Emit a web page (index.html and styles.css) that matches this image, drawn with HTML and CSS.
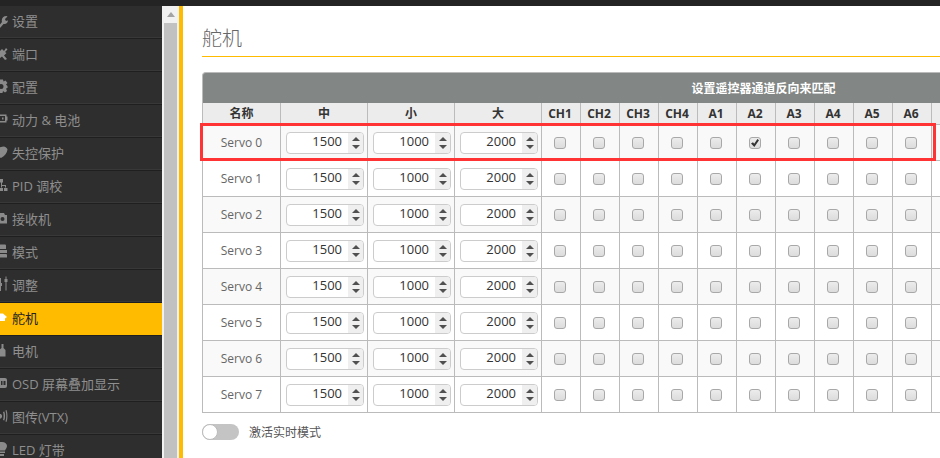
FILE: index.html
```html
<!DOCTYPE html>
<html>
	<head>
		<meta charset="UTF-8">
		<title>舵机</title>
		<link rel="stylesheet" href="styles.css">
	</head>
	<body>
		<div class="topbar"></div>
		<div class="app">
			<nav class="sidebar">
				<a class="nav-item"><svg class="nav-icon" viewBox="0 0 8 16"><path d="M-2 15 L2 10 C1 7 3 4 6.500 4 L7.500 4.500 L5 7 L5.500 8.500 L7 9 L8 8 C8 11 6 12.500 3.500 12 L0 16 Z"/></svg>设置</a>
				<a class="nav-item"><svg class="nav-icon" viewBox="0 0 8 16"><path d="M0 6 L2 4 L4 6 L6 3 L7.500 4.500 L5 7 L6.500 8 L4 10.500 L7 14 L5 15 L2 11.500 L0 13 Z"/></svg>端口</a>
				<a class="nav-item"><svg class="nav-icon" viewBox="0 0 8 16"><path fill-rule="evenodd" d="M-1 1.500 H3 L3.500 3.500 L5.500 2.500 L7.500 5 L6 6.500 L7.500 8 V10 L6 10.500 L7 13 L5 14.500 L3 13 L2.500 15 H-1 Z M1 6 A2.500 2.500 0 1 0 1 11 A2.500 2.500 0 1 0 1 6 Z"/></svg>配置</a>
				<a class="nav-item"><svg class="nav-icon" viewBox="0 0 8 16"><path fill-rule="evenodd" d="M0 3.500 H6.500 V5.500 H7.500 V9.500 H6.500 V11.500 H0 Z M0 5 V10 H5 V5 Z M2 6.500 H3.500 V8.500 H2 Z"/></svg>动力 &amp; 电池</a>
				<a class="nav-item"><svg class="nav-icon" viewBox="0 0 8 16"><path d="M-3 4 C0 3 2 3 4 2.500 C6 3 7 4 7.500 5.500 C7 9 5 12 1 14 L-3 12 Z"/></svg>失控保护</a>
				<a class="nav-item"><svg class="nav-icon" viewBox="0 0 8 16"><path d="M0 2 H3 V5.500 H0 Z M1 5.500 H2 V8 H6 V10.500 H5 V9 H2 V10.500 H1 Z M0 11 H3 V14 H0 Z M4 11 H7.500 V14 H4 Z"/></svg>PID 调校</a>
				<a class="nav-item"><svg class="nav-icon" viewBox="0 0 8 16"><path fill-rule="evenodd" d="M0 3 H4 L5 5 H7 V13.500 H0 Z M2.500 7 A2 2 0 1 0 2.500 11 A2 2 0 1 0 2.500 7 Z"/></svg>接收机</a>
				<a class="nav-item"><svg class="nav-icon" viewBox="0 0 8 16"><path d="M0 1.500 H5 A1 1 0 0 1 6 2.500 V6 H0 Z M0 7 H7 V10 H0 Z M0 11 H6 A1 1 0 0 1 7 12 V14.500 H0 Z"/></svg>模式</a>
				<a class="nav-item"><svg class="nav-icon" viewBox="0 0 8 16"><path d="M0 2 H1 V7 H2 V10 H1 V15 H0 Z M5.500 0.500 H6.500 V3 H7.500 V6 H6.500 V14.500 H5.500 V6 H4.500 V3 H5.500 Z"/></svg>调整</a>
				<a class="nav-item nav-item-active"><svg class="nav-icon" viewBox="0 0 8 16"><path d="M0 4.500 H3 L7 8 L5 9.500 V12 H0 Z"/></svg>舵机</a>
				<a class="nav-item"><svg class="nav-icon" viewBox="0 0 8 16"><path d="M1.500 2 H3.500 V6 L5.500 8 V14.500 H-1 V8 L1.500 6 Z"/></svg>电机</a>
				<a class="nav-item"><svg class="nav-icon" viewBox="0 0 8 16"><path fill-rule="evenodd" d="M-1 3 H5 A2 2 0 0 1 7 5 V11 A2 2 0 0 1 5 13 H-1 Z M1 6 V10 H2.500 V6 Z M3.500 6 V10 H5.500 V6 Z"/></svg>OSD 屏幕叠加显示</a>
				<a class="nav-item"><svg class="nav-icon" viewBox="0 0 8 16"><path d="M0 6 H1 L2 7.500 V9 L1 10.500 H0 Z M3 4 L4.300 3.500 C5.300 6 5.300 10 4.300 12.500 L3 12 C3.800 10 3.800 6 3 4 Z M5.500 2.500 L6.500 2 C7.800 5.500 7.800 10.500 6.500 14 L5.500 13.500 C6.600 10.500 6.600 5.500 5.500 2.500 Z"/></svg>图传(VTX)</a>
				<a class="nav-item"><svg class="nav-icon" viewBox="0 0 8 16"><path d="M2 1 C5 1 7 3 7 5 C7 7 5.500 8 5 9.500 H-1 V1 Z M-1 10.500 H5 V12 H-1 Z M-1 13 H4 V15 H-1 Z"/></svg>LED 灯带</a>
			</nav>
			<div class="scrollbar">
				<span class="scroll-arrow"></span>
				<span class="scroll-thumb"></span>
			</div>
			<main class="content">
				<h1 class="page-title">舵机</h1>
				<table class="servo-table">
					<colgroup>
						<col class="col-name"><col class="col-num"><col class="col-num"><col class="col-num">
						<col class="col-ch"><col class="col-ch"><col class="col-ch"><col class="col-ch"><col class="col-ch">
						<col class="col-ch"><col class="col-ch"><col class="col-ch"><col class="col-ch"><col class="col-ch">
						<col>
					</colgroup>
					<thead>
						<tr class="title-row"><th colspan="15">设置遥控器通道反向来匹配</th></tr>
						<tr class="label-row">
							<th>名称</th><th>中</th><th>小</th><th>大</th>
							<th>CH1</th><th>CH2</th><th>CH3</th><th>CH4</th>
							<th>A1</th><th>A2</th><th>A3</th><th>A4</th><th>A5</th><th>A6</th><th></th>
						</tr>
					</thead>
					<tbody>
						<tr>
							<td class="name">Servo 0</td>
							<td><div class="num"><input value="1500"><span class="spin"></span></div></td>
							<td><div class="num"><input value="1000"><span class="spin"></span></div></td>
							<td><div class="num"><input value="2000"><span class="spin"></span></div></td>
							<td><input type="checkbox"></td><td><input type="checkbox"></td><td><input type="checkbox"></td><td><input type="checkbox"></td><td><input type="checkbox"></td>
							<td><input type="checkbox" checked></td><td><input type="checkbox"></td><td><input type="checkbox"></td><td><input type="checkbox"></td><td><input type="checkbox"></td>
							<td></td>
						</tr>
						<tr>
							<td class="name">Servo 1</td>
							<td><div class="num"><input value="1500"><span class="spin"></span></div></td>
							<td><div class="num"><input value="1000"><span class="spin"></span></div></td>
							<td><div class="num"><input value="2000"><span class="spin"></span></div></td>
							<td><input type="checkbox"></td><td><input type="checkbox"></td><td><input type="checkbox"></td><td><input type="checkbox"></td><td><input type="checkbox"></td>
							<td><input type="checkbox"></td><td><input type="checkbox"></td><td><input type="checkbox"></td><td><input type="checkbox"></td><td><input type="checkbox"></td>
							<td></td>
						</tr>
						<tr>
							<td class="name">Servo 2</td>
							<td><div class="num"><input value="1500"><span class="spin"></span></div></td>
							<td><div class="num"><input value="1000"><span class="spin"></span></div></td>
							<td><div class="num"><input value="2000"><span class="spin"></span></div></td>
							<td><input type="checkbox"></td><td><input type="checkbox"></td><td><input type="checkbox"></td><td><input type="checkbox"></td><td><input type="checkbox"></td>
							<td><input type="checkbox"></td><td><input type="checkbox"></td><td><input type="checkbox"></td><td><input type="checkbox"></td><td><input type="checkbox"></td>
							<td></td>
						</tr>
						<tr>
							<td class="name">Servo 3</td>
							<td><div class="num"><input value="1500"><span class="spin"></span></div></td>
							<td><div class="num"><input value="1000"><span class="spin"></span></div></td>
							<td><div class="num"><input value="2000"><span class="spin"></span></div></td>
							<td><input type="checkbox"></td><td><input type="checkbox"></td><td><input type="checkbox"></td><td><input type="checkbox"></td><td><input type="checkbox"></td>
							<td><input type="checkbox"></td><td><input type="checkbox"></td><td><input type="checkbox"></td><td><input type="checkbox"></td><td><input type="checkbox"></td>
							<td></td>
						</tr>
						<tr>
							<td class="name">Servo 4</td>
							<td><div class="num"><input value="1500"><span class="spin"></span></div></td>
							<td><div class="num"><input value="1000"><span class="spin"></span></div></td>
							<td><div class="num"><input value="2000"><span class="spin"></span></div></td>
							<td><input type="checkbox"></td><td><input type="checkbox"></td><td><input type="checkbox"></td><td><input type="checkbox"></td><td><input type="checkbox"></td>
							<td><input type="checkbox"></td><td><input type="checkbox"></td><td><input type="checkbox"></td><td><input type="checkbox"></td><td><input type="checkbox"></td>
							<td></td>
						</tr>
						<tr>
							<td class="name">Servo 5</td>
							<td><div class="num"><input value="1500"><span class="spin"></span></div></td>
							<td><div class="num"><input value="1000"><span class="spin"></span></div></td>
							<td><div class="num"><input value="2000"><span class="spin"></span></div></td>
							<td><input type="checkbox"></td><td><input type="checkbox"></td><td><input type="checkbox"></td><td><input type="checkbox"></td><td><input type="checkbox"></td>
							<td><input type="checkbox"></td><td><input type="checkbox"></td><td><input type="checkbox"></td><td><input type="checkbox"></td><td><input type="checkbox"></td>
							<td></td>
						</tr>
						<tr>
							<td class="name">Servo 6</td>
							<td><div class="num"><input value="1500"><span class="spin"></span></div></td>
							<td><div class="num"><input value="1000"><span class="spin"></span></div></td>
							<td><div class="num"><input value="2000"><span class="spin"></span></div></td>
							<td><input type="checkbox"></td><td><input type="checkbox"></td><td><input type="checkbox"></td><td><input type="checkbox"></td><td><input type="checkbox"></td>
							<td><input type="checkbox"></td><td><input type="checkbox"></td><td><input type="checkbox"></td><td><input type="checkbox"></td><td><input type="checkbox"></td>
							<td></td>
						</tr>
						<tr>
							<td class="name">Servo 7</td>
							<td><div class="num"><input value="1500"><span class="spin"></span></div></td>
							<td><div class="num"><input value="1000"><span class="spin"></span></div></td>
							<td><div class="num"><input value="2000"><span class="spin"></span></div></td>
							<td><input type="checkbox"></td><td><input type="checkbox"></td><td><input type="checkbox"></td><td><input type="checkbox"></td><td><input type="checkbox"></td>
							<td><input type="checkbox"></td><td><input type="checkbox"></td><td><input type="checkbox"></td><td><input type="checkbox"></td><td><input type="checkbox"></td>
							<td></td>
						</tr>
					</tbody>
				</table>
				<div class="live-mode">
					<span class="switch"><span class="knob"></span></span>
					<span>激活实时模式</span>
				</div>
				<div class="highlight"></div>
			</main>
		</div>
	</body>
</html>
```
FILE: styles.css
```css
html, body{
	margin: 0;
	padding: 0;
	height: 100%;
	overflow: hidden;
}
body{
	display: flex;
	flex-direction: column;
	font-family: "Open Sans", "Noto Sans CJK SC", sans-serif;
	background: #fff;
}
.topbar{
	height: 6px;
	flex: none;
	background: #242424;
}
.app{
	display: flex;
	flex: 1;
	min-height: 0;
}

/* sidebar */
.sidebar{
	width: 162px;
	flex: none;
	background: #2e2e2e;
	overflow: hidden;
}
.nav-item{
	display: flex;
	align-items: center;
	gap: 4px;
	height: 33px;
	box-sizing: border-box;
	padding-bottom: 4px;
	border-bottom: 1px solid #1f1f1f;
	box-shadow: inset 0 -1px 0 #383838;
	color: #8f8f8f;
	font-size: 13px;
	white-space: nowrap;
}
.nav-icon{
	width: 8px;
	height: 16px;
	flex: none;
	fill: #8a8a8a;
}
.nav-item-active{
	background: #ffbb00;
	color: #222;
	box-shadow: none;
}
.nav-item-active .nav-icon{
	fill: #fff;
}

/* fake scrollbar */
.scrollbar{
	width: 17px;
	flex: none;
	display: flex;
	flex-direction: column;
	align-items: center;
	background: #f1f1f1;
}
.scroll-arrow{
	width: 0;
	height: 0;
	margin-top: 6px;
	margin-bottom: 6px;
	border-left: 4px solid transparent;
	border-right: 4px solid transparent;
	border-bottom: 5px solid #a3a3a3;
}
.scroll-thumb{
	width: 13px;
	flex: 1;
	background: #c1c1c1;
}

/* content */
.content{
	position: relative;
	flex: 1;
	min-width: 0;
	overflow: hidden;
	border-left: 4px solid #ffbb00;
	padding: 0 0 0 19px;
}
.page-title{
	margin: 0 0 15px;
	height: 51px;
	box-sizing: border-box;
	border-bottom: 1px solid #ffbb00;
	color: #666;
	font-size: 20px;
	font-weight: 300;
	line-height: 65px;
}
.servo-table{
	width: 1123px;
	table-layout: fixed;
	border-collapse: separate;
	border-spacing: 0;
	font-size: 12px;
}
.col-name{
	width: 79px;
}
.col-num{
	width: 87px;
}
.col-ch{
	width: 39px;
}
.servo-table th,
.servo-table td{
	box-sizing: border-box;
	padding: 0;
	border-right: 1px solid #bbb;
	border-bottom: 1px solid #bbb;
	text-align: center;
}
.servo-table th:first-child,
.servo-table td:first-child{
	border-left: 1px solid #bbb;
}
.title-row th{
	height: 31px;
	background: #828684;
	border: 1px solid #bbb;
	border-bottom: 0;
	border-radius: 4px 0 0 0;
	color: #fff;
	font-size: 12px;
	font-weight: bold;
}
.label-row th{
	height: 22px;
	padding-bottom: 1px;
	background: #ececec;
	color: #333;
	font-size: 12px;
	font-weight: bold;
}
.label-row th:nth-child(n+5){
	padding-right: 2px;
}
.servo-table tbody tr{
	height: 36px;
}
.servo-table tbody tr:nth-child(odd){
	background: #f9f9f9;
}
.name{
	color: #666;
}
.num{
	display: flex;
	box-sizing: border-box;
	width: 78px;
	height: 22px;
	margin-left: 5px;
	border: 1px solid #ccc;
	border-radius: 4px;
	background: #fff;
	overflow: hidden;
}
.num input{
	flex: 1;
	min-width: 0;
	padding: 0 6px 4px 0;
	border: 0;
	outline: 0;
	background: none;
	color: #333;
	font-family: "Open Sans", sans-serif;
	font-size: 13px;
	text-align: right;
}
.spin{
	display: flex;
	flex-direction: column;
	align-items: center;
	justify-content: center;
	gap: 4px;
	width: 15px;
	flex: none;
	background: #efefef;
}
.spin::before,
.spin::after{
	content: "";
	width: 0;
	height: 0;
	border-left: 4px solid transparent;
	border-right: 4px solid transparent;
}
.spin::before{
	border-bottom: 4px solid #505050;
}
.spin::after{
	border-top: 4px solid #505050;
}
input[type="checkbox"]{
	appearance: none;
	display: block;
	position: relative;
	box-sizing: border-box;
	width: 12px;
	height: 12px;
	margin: 1px 14px 0 12px;
	border: 1px solid #a8a8a8;
	border-radius: 3px;
	background: linear-gradient(#ececec, #dcdcdc);
}
input[type="checkbox"]:checked::before{
	content: "";
	position: absolute;
	left: 1px;
	top: 1px;
	width: 8px;
	height: 8px;
	background: #333;
	clip-path: polygon(0 55%, 25% 40%, 40% 60%, 80% 0, 100% 15%, 42% 100%);
}

/* toggle under the table */
.live-mode{
	display: flex;
	align-items: center;
	gap: 10px;
	margin-top: 10px;
	color: #555;
	font-size: 12px;
}
.switch{
	display: block;
	width: 37px;
	height: 16px;
	border-radius: 8px;
	background: #c4c4c4;
}
.knob{
	display: block;
	box-sizing: border-box;
	width: 16px;
	height: 16px;
	border: 1px solid #bbb;
	border-radius: 50%;
	background: #fff;
}

/* red annotation over the first row */
.highlight{
	position: absolute;
	left: 17px;
	top: 117px;
	width: 736px;
	height: 38px;
	box-sizing: border-box;
	border: 3px solid #ff3333;
}
```
